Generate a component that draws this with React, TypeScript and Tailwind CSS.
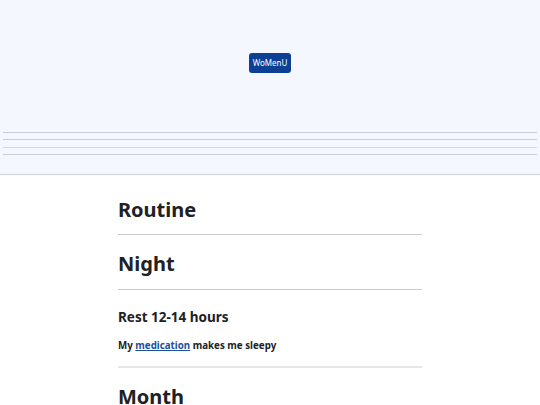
export default function App() {
  return (
    <div className="min-h-[405px] bg-white font-['Noto_Sans',sans-serif] text-[#202124]">
      <header className="flex h-[175px] flex-col items-center border-b border-[#cfd3de] bg-[#f4f7fe]">
        <button className="mt-[53px] h-5 rounded-[3px] bg-[#0d3f94] px-1 text-[8px] leading-5 text-white">
          WoMenU
        </button>
        <div className="mt-[59px] flex w-full flex-col gap-[6.4px] px-[3px]">
          <div className="h-px bg-[#c9ccd6]" />
          <div className="h-px bg-[#c9ccd6]" />
          <div className="h-px bg-[#d3d7e2]" />
          <div className="h-px bg-[#c9ccd6]" />
        </div>
      </header>

      <main className="mx-auto w-[304px]">
        <h1 className="border-b border-[#cccccc] pb-3 pt-[23px] text-[20px] font-bold leading-6">Routine</h1>
        <h2 className="mt-[17px] border-b border-[#cccccc] pb-[13px] text-[20px] font-bold leading-6">Night</h2>
        <section className="border-b-2 border-[#e6e6e6] pb-3">
          <h3 className="mt-[17px] text-[13.5px] font-bold leading-5">Rest 12-14 hours</h3>
          <p className="mt-[11px] text-[9.75px] font-bold leading-4">
            My{" "}
            <a href="#" className="text-[#1d4f9e] underline">
              medication
            </a>{" "}
            makes me sleepy
          </p>
        </section>
        <h2 className="mt-[17px] text-[20px] font-bold leading-6">Month</h2>
      </main>
    </div>
  );
}
